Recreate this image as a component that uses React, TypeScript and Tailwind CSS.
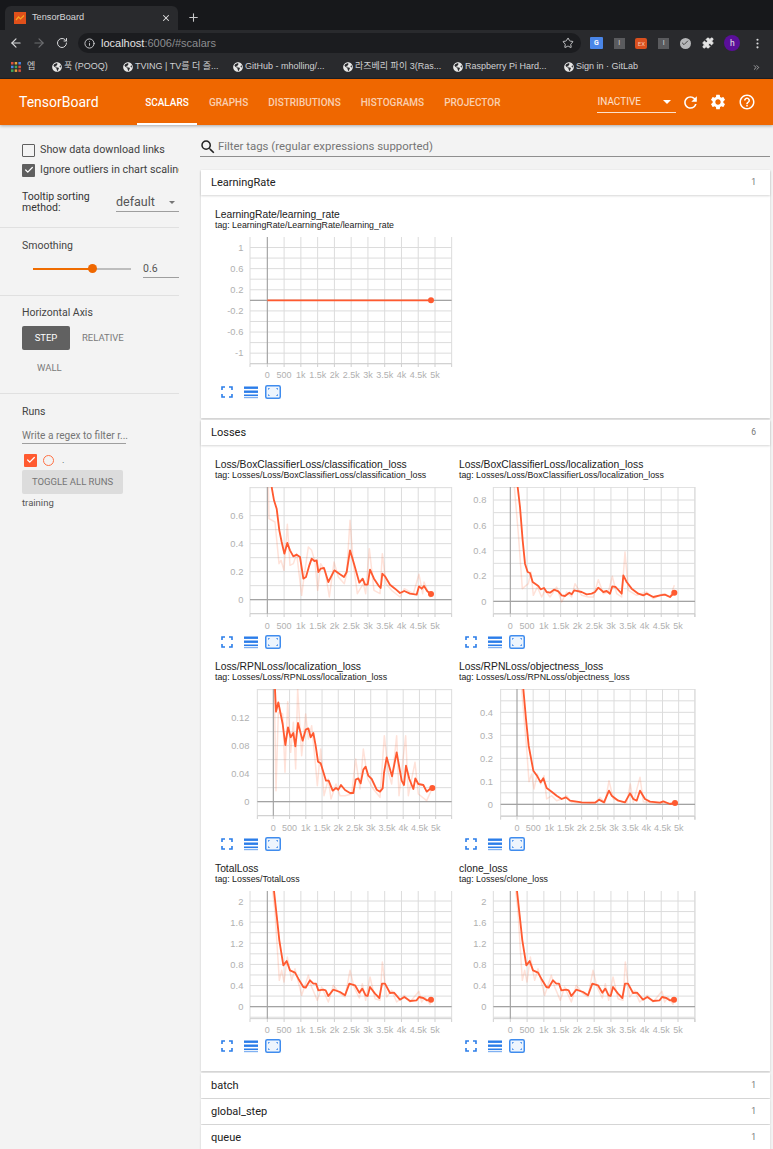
import React from 'react';
import { ArrowLeft, ArrowRight, RotateCw, Info, Star, X, Plus, Puzzle, EllipsisVertical, ChevronsRight, Check } from 'lucide-react';
import { MdRefresh, MdSettings, MdHelpOutline, MdSearch } from 'react-icons/md';
import { FaGlobeAmericas } from 'react-icons/fa';

const BOOKMARKS = [
  { label: '푹 (POOQ)', width: 'w-[71px]' },
  { label: 'TVING | TV를 더 즐...', width: 'w-[110px]' },
  { label: 'GitHub - mholling/...', width: 'w-[110px]' },
  { label: '라즈베리 파이 3(Ras...', width: 'w-[110px]' },
  { label: 'Raspberry Pi Hard...', width: 'w-[111px]' },
  { label: 'Sign in · GitLab', width: 'w-[80px]' },
];

const X_LABELS = ['0', '500', '1k', '1.5k', '2k', '2.5k', '3k', '3.5k', '4k', '4.5k', '5k'];

type ChartProps = {
  title: string;
  tag: string;
  vx: number;
  left: number;
  right: number;
  top: number;
  bottom: number;
  x0: number;
  xStep: number;
  labelY: number;
  ticks: [string, number][];
  zeroY: number;
  minor: number;
  smooth: string;
  faint?: string;
  dot: [number, number];
};

function Chart({ title, tag, vx, left, right, top, bottom, x0, xStep, labelY, ticks, zeroY, minor, smooth, faint, dot }: ChartProps) {
  const clip = `clip-${title.replace(/[^a-zA-Z]/g, '')}`;
  const hLines: number[] = [];
  for (let y = zeroY; y >= top; y -= minor) hLines.push(y);
  for (let y = zeroY + minor; y <= bottom + 1; y += minor) hLines.push(y);
  const vLines: number[] = [];
  for (let x = x0 + xStep; x < right; x += xStep) vLines.push(x);

  return (
    <div className="w-[244px] h-[202px] shrink-0">
      <div className="h-[14px] text-[10.3px] leading-[16px] text-[#212121] whitespace-nowrap font-['Liberation_Sans',sans-serif]">{title}</div>
      <div className="h-[11px] text-[8.8px] leading-[9px] text-[#212121] whitespace-nowrap font-['Liberation_Sans',sans-serif]">{tag}</div>
      <svg width="240" height="145" viewBox={`${vx} ${top} 720 435`} className="mt-[5px] block">
        <defs>
          <clipPath id={clip}>
            <rect x={left} y={top} width={right - left} height={bottom - top} />
          </clipPath>
        </defs>
        {hLines.map((y) => (
          <line key={y} x1={left} x2={right} y1={y} y2={y} stroke="#dcdcdc" strokeWidth="3" />
        ))}
        {[left, ...vLines, right].map((x) => (
          <line key={x} x1={x} x2={x} y1={top} y2={bottom} stroke="#dcdcdc" strokeWidth="3" />
        ))}
        <line x1={left} x2={right} y1={bottom} y2={bottom} stroke="#cfcfcf" strokeWidth="3" />
        {[left, x0, ...vLines, right].map((x) => (
          <line key={x} x1={x} x2={x} y1={bottom} y2={bottom + 10} stroke="#cfcfcf" strokeWidth="3" />
        ))}
        <line x1={left} x2={right} y1={zeroY} y2={zeroY} stroke="#a3a3a3" strokeWidth="3.5" />
        <line x1={x0} x2={x0} y1={top} y2={bottom} stroke="#a3a3a3" strokeWidth="3.5" />
        {ticks.map(([label, y]) => (
          <text key={label} x={x0 - 72} y={y + 10} textAnchor="end" fontSize="28" fill="#b0b0b0" fontFamily="'Liberation Sans', sans-serif">
            {label}
          </text>
        ))}
        {X_LABELS.map((label, i) => (
          <text key={label} x={x0 + i * xStep} y={labelY + 10} textAnchor="middle" fontSize="27" fill="#b0b0b0" fontFamily="'Liberation Sans', sans-serif">
            {label}
          </text>
        ))}
        <g clipPath={`url(#${clip})`}>
          {faint && <polyline points={faint} fill="none" stroke="#ff7043" strokeOpacity="0.2" strokeWidth="4.500" strokeLinejoin="round" />}
          <polyline points={smooth} fill="none" stroke="#ff5a30" strokeWidth="5.500" strokeLinejoin="round" />
          <circle cx={dot[0]} cy={dot[1]} r="9" fill="#ff5a30" />
        </g>
      </svg>
      <div className="h-[14px] mt-[3px] ml-[6px] flex items-center gap-[11px]">
        <svg width="12" height="12" viewBox="0 0 12 12" fill="none" stroke="#2b7de9" strokeWidth="1.6">
          <path d="M1 4V1h3M8 1h3v3M11 8v3H8M4 11H1V8" />
        </svg>
        <svg width="14" height="13" viewBox="0 0 14 13" fill="#2b7de9">
          <rect y="0.5" width="14" height="2.4" />
          <rect y="4.5" width="14" height="2.4" />
          <rect y="8.5" width="14" height="1.6" />
          <rect y="11" width="14" height="1.2" opacity="0.6" />
        </svg>
        <svg width="16" height="14" viewBox="0 0 16 14" fill="none" className="-ml-[4px]">
          <rect x="0.75" y="0.75" width="14.5" height="12.5" rx="1.5" fill="#eef5fd" stroke="#3f8cee" strokeWidth="1.5" />
          <path d="M3.5 4.500V3.500H4.500M11.500 3.500h1v1M12.500 9.500v1h-1M4.500 10.500H3.500V9.500" stroke="#2b7de9" strokeWidth="1" />
        </svg>
      </div>
    </div>
  );
}

function SectionHeader({ name, count }: { name: string; count: number }) {
  return (
    <div className="h-[25px] bg-white flex items-center justify-between pl-[10px] pr-[14px] shadow-[0_1px_2px_rgba(0,0,0,0.16)] relative">
      <span className="pt-[1px] text-[11px] font-['Roboto',sans-serif] text-[#212121]">{name}</span>
      <span className="text-[8.5px] font-['Roboto',sans-serif] text-[#757575]">{count}</span>
    </div>
  );
}

const box = { vx: 45, left: 150, right: 755, x0: 202, xStep: 50.3 };
const rightBox = { vx: 27, left: 130, right: 735, x0: 181, xStep: 50.3 };

const totalSmooth = '222,107 230,180 238,255 250,330 260,317 270,345 285,352 295,370 310,395 317,397 330,375 340,385 348,385 355,405 370,403 377,405 385,422 400,403 420,410 435,420 448,385 465,390 478,412 487,400 497,420 503,422 510,395 525,415 538,428 546,385 555,385 570,413 582,412 600,433 613,425 630,437 650,435 657,425 670,428 680,435 693,433';
const totalFaint = '218,107 225,170 238,375 245,345 252,380 262,305 275,375 285,340 305,420 325,360 335,395 352,435 365,395 385,440 400,390 420,415 435,425 450,345 462,395 478,428 487,385 497,435 510,365 525,430 540,435 547,320 560,425 575,405 590,440 613,420 630,440 657,408 665,440 675,425 690,447 693,433';
const shiftPoints = (pts: string, dx: number) =>
  pts.split(' ').map((p) => {
    const [x, y] = p.split(',').map(Number);
    return `${x + dx},${y}`;
  }).join(' ');

const totalTicks: [string, number][] = [['2', 138], ['1.6', 201], ['1.2', 265], ['0.8', 328], ['0.4', 391], ['0', 454]];

export default function App() {
  return (
    <div className="h-[1149px] w-[773px] overflow-hidden bg-[#f3f3f3] font-['Roboto',sans-serif]">
      {/* browser chrome */}
      <div className="h-[30px] bg-[#17181b] flex items-end pl-[5px]">
        <div className="w-[173px] h-[24px] bg-[#292a2d] rounded-t-[6px] flex items-center pl-[9px] pr-[7px]">
          <svg width="12" height="12" viewBox="0 0 12 12" className="shrink-0">
            <rect width="12" height="12" fill="#e0501a" />
            <path d="M2 8l2.500-3 2 2L10 3.500" fill="none" stroke="#f5a623" strokeWidth="1.200" />
          </svg>
          <span className="ml-[6px] text-[9.200px] text-[#d5d6d8] font-['Liberation_Sans',sans-serif] flex-1">TensorBoard</span>
          <X size={10} color="#e3e3e3" strokeWidth={2.5} />
        </div>
        <div className="ml-[9px] mb-[6px]"><Plus size={13} color="#c8c9cb" strokeWidth={2} /></div>
      </div>
      <div className="h-[26px] bg-[#292a2d] flex items-center pl-[9px] pr-[9px]">
        <ArrowLeft size={14} color="#d8d9db" />
        <ArrowRight size={14} color="#6d6e71" className="ml-[9px]" />
        <RotateCw size={12} color="#d8d9db" className="ml-[10px]" />
        <div className="ml-[10px] w-[503px] h-[20px] rounded-full bg-[#1b1c1f] flex items-center pl-[6px] pr-[7px]">
          <Info size={11} color="#d0d1d3" />
          <span className="ml-[6px] text-[11px] text-[#e3e3e3] font-['Liberation_Sans',sans-serif] flex-1">
            localhost<span className="text-[#8c8d90]">:6006/#scalars</span>
          </span>
          <Star size={12} color="#c5c6c8" />
        </div>
        <div className="ml-[9px] flex items-center flex-1 justify-between">
          <div className="w-[13px] h-[12px] bg-[#4a86e8] rounded-[1px] flex items-center justify-center text-[7px] text-white font-bold">G</div>
          <div className="w-[11px] h-[11px] bg-[#5a5b5e] flex items-center justify-center text-[7px] text-[#d5d5d5]">I</div>
          <div className="w-[12px] h-[11px] bg-[#d9501e] rounded-[2px] flex items-center justify-center text-[6px] text-[#f3c5b2]">EX</div>
          <div className="w-[11px] h-[11px] bg-[#5a5b5e] flex items-center justify-center text-[7px] text-[#d5d5d5]">I</div>
          <div className="w-[11px] h-[11px] bg-[#b5b6b8] rounded-full flex items-center justify-center"><Check size={8} color="#444" strokeWidth={3} /></div>
          <Puzzle size={12} color="#e5e5e5" fill="#e5e5e5" />
          <div className="w-[16px] h-[16px] rounded-full bg-[#5a0f99] flex items-center justify-center text-[8.5px] text-[#e5e5e5]">h</div>
          <EllipsisVertical size={13} color="#d8d9db" />
        </div>
      </div>
      <div className="h-[23px] bg-[#292a2d] flex items-center pl-[11px] pr-[12px] text-[9px] text-[#d0d1d3] font-['Liberation_Sans','Noto_Sans_CJK_KR',sans-serif] whitespace-nowrap border-b border-[#1f2023]">
        <svg width="10" height="10" viewBox="0 0 10 10" className="shrink-0">
          <rect width="2.500" height="2.500" fill="#d9503f" />
          <rect x="3.700" width="2.500" height="2.500" fill="#e8a33d" />
          <rect x="7.400" width="2.500" height="2.500" fill="#4a86e8" />
          <rect y="3.700" width="2.500" height="2.500" fill="#4a86e8" />
          <rect x="3.700" y="3.700" width="2.500" height="2.500" fill="#3fa85b" />
          <rect x="7.400" y="3.700" width="2.500" height="2.500" fill="#d9503f" />
          <rect y="7.400" width="2.500" height="2.500" fill="#3fa85b" />
          <rect x="3.700" y="7.400" width="2.500" height="2.500" fill="#e8a33d" />
          <rect x="7.400" y="7.400" width="2.500" height="2.500" fill="#d9503f" />
        </svg>
        <span className="ml-[6px] w-[25px]">엡</span>
        <div className="flex items-center">
          {BOOKMARKS.map((b) => (
            <div key={b.label} className={`flex items-center shrink-0 ${b.width}`}>
              <FaGlobeAmericas size={10} color="#e5e5e5" className="shrink-0" />
              <span className="ml-[2px]">{b.label}</span>
            </div>
          ))}
        </div>
        <ChevronsRight size={9} color="#c5c6c8" className="ml-auto" />
      </div>

      {/* tensorboard toolbar */}
      <header className="h-[46px] bg-[#ef6700] text-white flex items-center pl-[19px] pr-[17px] shadow-[0_1px_3px_rgba(0,0,0,0.3)] relative">
        <span className="w-[118px] shrink-0 text-[14px]">TensorBoard</span>
        <nav className="flex items-center gap-[4px] text-[10px] font-medium h-full shrink-0">
          <span className="h-full w-[60px] flex items-center justify-center border-b-2 border-white pt-[2px]">SCALARS</span>
          <span className="h-full px-[8px] flex items-center text-white/70">GRAPHS</span>
          <span className="h-full px-[8px] flex items-center text-white/70">DISTRIBUTIONS</span>
          <span className="h-full px-[8px] flex items-center text-white/70">HISTOGRAMS</span>
          <span className="h-full px-[8px] flex items-center text-white/70">PROJECTOR</span>
        </nav>
        <div className="ml-[89px] w-[79px] h-[21px] shrink-0 border-b border-white/80 flex items-center justify-between pr-[5px] text-[10px] text-white/80">
          INACTIVE
          <span className="w-0 h-0 border-x-[4px] border-x-transparent border-t-[4px] border-t-white" />
        </div>
        <MdRefresh size={19} className="ml-[5px] shrink-0" />
        <MdSettings size={18} className="ml-[9px] shrink-0" />
        <MdHelpOutline size={18} className="ml-[11px] shrink-0" />
      </header>

      <div className="flex">
        {/* sidebar */}
        <aside className="w-[200px] shrink-0 text-[10.750px] text-[#424242]">
          <div className="w-[179px] pl-[22px] pt-[18px] h-[103px] border-b border-[#e0e0e0]">
            <div className="flex items-center h-[14px]">
              <span className="w-[13px] h-[13px] border-[1.5px] border-[#5f5f5f] rounded-[1px] shrink-0" />
              <span className="ml-[5px] whitespace-nowrap">Show data download links</span>
            </div>
            <div className="flex items-center h-[14px] mt-[6px] overflow-hidden">
              <span className="w-[13px] h-[13px] bg-[#5f5f5f] rounded-[1px] shrink-0 flex items-center justify-center"><Check size={10} color="#fff" strokeWidth={3} /></span>
              <span className="ml-[5px] whitespace-nowrap">Ignore outliers in chart scaling</span>
            </div>
            <div className="flex mt-[13px]">
              <div className="w-[94px] text-[10.500px] leading-[11px] text-[#333] pt-[1px]">Tooltip sorting<br />method:</div>
              <div className="w-[63px] h-[19px] mt-[3px] border-b border-[#9e9e9e] flex items-center justify-between pr-[4px] text-[12.500px] text-[#555]">
                default
                <span className="w-0 h-0 border-x-[3.500px] border-x-transparent border-t-[3.500px] border-t-[#757575]" />
              </div>
            </div>
          </div>
          <div className="w-[179px] h-[68px] pl-[22px] pt-[12px] border-b border-[#e0e0e0]">
            <div className="text-[10.500px] leading-[12px] text-[#444]">Smoothing</div>
            <div className="flex items-center mt-[7px]">
              <div className="ml-[11px] w-[98px] h-[2px] bg-[#bdbdbd] flex items-center">
                <div className="w-[59px] h-[2px] bg-[#ef6c00]" />
                <div className="w-[9px] h-[9px] rounded-full bg-[#ef6700] -ml-[4px] shrink-0" />
              </div>
              <div className="ml-[12px] w-[36px] h-[19px] pt-[3px] border-b border-[#9e9e9e] text-[10.500px] leading-[13px] text-[#555]">0.6</div>
            </div>
          </div>
          <div className="w-[179px] h-[98px] pl-[22px] pt-[11px] border-b border-[#e0e0e0]">
            <div className="text-[10.500px] leading-[12px] text-[#444]">Horizontal Axis</div>
            <div className="flex items-center mt-[7px] text-[9.500px]">
              <div className="w-[48px] h-[24px] bg-[#616161] rounded-[2px] text-white flex items-center justify-center">STEP</div>
              <div className="ml-[12px] text-[#7a7a7a]">RELATIVE</div>
            </div>
            <div className="ml-[15px] mt-[13px] text-[9.500px] leading-[10px] text-[#7a7a7a]">WALL</div>
          </div>
          <div className="pl-[22px] pt-[12px]">
            <div className="text-[10.500px] leading-[12px] text-[#444]">Runs</div>
            <div className="w-[104px] h-[19px] mt-[7px] border-b border-[#9e9e9e] text-[10.100px] leading-[21px] text-[#757575] whitespace-nowrap">Write a regex to filter r...</div>
            <div className="flex items-center h-[14px] mt-[9px] ml-[2px]">
              <span className="w-[13px] h-[13px] bg-[#ff5a30] rounded-[1px] flex items-center justify-center"><Check size={10} color="#fff" strokeWidth={3} /></span>
              <span className="ml-[6px] w-[11px] h-[11px] rounded-full border-[1.5px] border-[#ff7043]" />
              <span className="ml-[8px] text-[9px] leading-[10px]">.</span>
            </div>
            <div className="w-[101px] h-[24px] mt-[3px] bg-[#dcdcdc] rounded-[2px] flex items-center justify-center text-[9.500px] text-[#757575]">TOGGLE ALL RUNS</div>
            <div className="mt-[2px] text-[9.500px] leading-[13px] text-[#555]">training</div>
          </div>
        </aside>

        {/* main column */}
        <main className="w-[570px]">
          <div className="h-[32px] flex items-end border-b border-[#8f8f8f]">
            <MdSearch size={18} color="#212121" className="ml-[-1px]" />
            <span className="ml-[1px] mb-[1px] text-[11.400px] leading-[18px] text-[#757575]">Filter tags (regular expressions supported)</span>
          </div>
          <div className="mt-[13px] ml-[1px] flex flex-col gap-[2px]">
            <section className="shadow-[0_1px_2px_rgba(0,0,0,0.18)]">
              <SectionHeader name="LearningRate" count={1} />
              <div className="bg-white pt-[12px] pb-[9px] pl-[14px]">
                <Chart
                  {...box}
                  title="LearningRate/learning_rate"
                  tag="tag: LearningRate/LearningRate/learning_rate"
                  top={322}
                  bottom={702}
                  labelY={735}
                  zeroY={512}
                  minor={31.700}
                  ticks={[['1', 353], ['0.6', 417], ['0.2', 480], ['-0.2', 543], ['-0.6', 607], ['-1', 670]]}
                  smooth="202,512 693,512"
                  dot={[693, 512]}
                />
              </div>
            </section>
            <section className="shadow-[0_1px_2px_rgba(0,0,0,0.18)]">
              <SectionHeader name="Losses" count={6} />
              <div className="bg-white pt-[12px] pb-[8px] pl-[14px] flex flex-wrap">
                <Chart
                  {...box}
                  title="Loss/BoxClassifierLoss/classification_loss"
                  tag="tag: Losses/Loss/BoxClassifierLoss/classification_loss"
                  top={110}
                  bottom={490}
                  labelY={525}
                  zeroY={448}
                  minor={42}
                  ticks={[['0.6', 195], ['0.4', 280], ['0.2', 364], ['0', 448]]}
                  smooth="215,110 222,150 230,175 238,240 245,275 253,310 262,278 270,300 280,318 290,313 300,320 310,385 318,380 328,345 335,325 343,332 350,330 355,365 362,355 372,353 385,395 403,360 420,372 432,380 440,365 450,300 462,340 478,397 488,385 495,403 503,403 510,358 522,385 535,405 542,413 547,370 555,378 570,403 585,415 600,428 613,422 630,430 650,433 657,408 665,415 672,407 682,423 693,431"
                  faint="205,110 207,205 225,215 237,340 243,330 252,360 262,222 270,345 280,340 290,310 305,435 312,380 325,290 335,300 345,335 353,420 362,340 375,360 388,440 402,335 415,380 433,400 440,370 450,210 460,340 472,430 490,400 497,430 508,295 522,420 540,430 547,310 558,400 575,420 600,440 613,415 640,430 657,372 668,430 672,395 690,440 693,431"
                  dot={[693, 431]}
                />
                <Chart
                  {...rightBox}
                  title="Loss/BoxClassifierLoss/localization_loss"
                  tag="tag: Losses/Loss/BoxClassifierLoss/localization_loss"
                  top={110}
                  bottom={490}
                  labelY={525}
                  zeroY={453}
                  minor={38}
                  ticks={[['0.8', 148], ['0.6', 225], ['0.4', 301], ['0.2', 377], ['0', 453]]}
                  smooth="203,110 210,170 218,270 225,340 233,365 240,368 248,395 265,407 272,417 282,413 290,425 300,427 312,418 325,423 335,435 345,437 358,427 365,432 373,420 395,425 410,432 425,430 435,425 445,412 460,425 470,422 480,430 487,408 497,410 515,430 520,375 530,395 545,415 565,430 580,435 590,430 610,440 630,435 645,433 660,440 673,427"
                  faint="193,110 205,250 217,415 235,400 243,365 250,435 262,410 275,440 285,420 300,440 320,410 335,455 350,425 365,440 375,400 395,435 415,440 430,440 445,388 460,430 475,425 487,378 500,430 515,440 525,305 535,420 560,435 590,425 610,445 640,430 660,440 673,405"
                  dot={[673, 427]}
                />
                <Chart
                  vx={45}
                  left={172}
                  right={755}
                  x0={220}
                  xStep={48.700}
                  title="Loss/RPNLoss/localization_loss"
                  tag="tag: Losses/Loss/RPNLoss/localization_loss"
                  top={100}
                  bottom={480}
                  labelY={515}
                  zeroY={438}
                  minor={42}
                  ticks={[['0.12', 186], ['0.08', 270], ['0.04', 354], ['0', 438]]}
                  smooth="225,100 228,168 235,140 248,205 256,268 264,215 272,245 280,232 286,272 294,202 308,255 317,222 325,218 332,245 340,232 347,270 354,318 362,323 378,375 386,375 398,405 408,397 415,402 423,388 435,403 450,412 460,412 467,372 475,368 482,383 490,342 497,333 505,360 515,370 530,402 540,408 548,398 552,352 560,305 576,362 590,290 605,375 612,388 618,330 628,370 640,400 646,368 655,385 670,388 680,408 690,400 697,397"
                  faint="223,100 228,405 235,170 248,175 255,350 263,138 272,290 280,200 287,340 293,100 305,300 317,175 325,250 335,210 345,310 352,390 362,280 372,420 385,370 393,430 408,385 420,420 435,420 455,415 467,310 480,400 490,280 503,370 520,400 540,425 553,240 565,350 575,385 590,240 597,420 617,240 625,420 645,320 655,415 680,435 697,397"
                  dot={[697, 397]}
                />
                <Chart
                  vx={27}
                  left={152}
                  right={735}
                  x0={201}
                  xStep={48.500}
                  title="Loss/RPNLoss/objectness_loss"
                  tag="tag: Losses/Loss/RPNLoss/objectness_loss"
                  top={100}
                  bottom={482}
                  labelY={515}
                  zeroY={446}
                  minor={34.500}
                  ticks={[['0.4', 170], ['0.3', 239], ['0.2', 308], ['0.1', 377], ['0', 446]]}
                  smooth="220,100 228,190 236,270 250,345 262,362 272,380 280,368 290,397 305,408 320,420 335,430 348,425 360,435 380,438 395,440 420,441 435,441 447,432 462,440 477,405 485,420 505,435 525,440 540,413 550,430 560,435 570,405 585,430 600,438 630,441 640,437 660,445 675,442"
                  faint="215,100 230,280 237,378 245,355 252,400 262,355 272,385 282,360 290,430 305,420 320,435 335,430 350,420 365,440 400,442 440,440 450,425 465,442 477,375 490,430 530,442 541,385 550,440 570,365 580,438 620,443 675,442"
                  dot={[675, 442]}
                />
                <Chart
                  {...box}
                  title="TotalLoss"
                  tag="tag: Losses/TotalLoss"
                  top={107}
                  bottom={490}
                  labelY={522}
                  zeroY={454}
                  minor={31.700}
                  ticks={totalTicks}
                  smooth={totalSmooth}
                  faint={totalFaint}
                  dot={[693, 433]}
                />
                <Chart
                  {...rightBox}
                  title="clone_loss"
                  tag="tag: Losses/clone_loss"
                  top={107}
                  bottom={490}
                  labelY={522}
                  zeroY={454}
                  minor={31.700}
                  ticks={totalTicks}
                  smooth={shiftPoints(totalSmooth, -21)}
                  faint={shiftPoints(totalFaint, -21)}
                  dot={[672, 433]}
                />
              </div>
            </section>
            <div className="flex flex-col gap-[1px]">
              <SectionHeader name="batch" count={1} />
              <SectionHeader name="global_step" count={1} />
              <SectionHeader name="queue" count={1} />
            </div>
          </div>
        </main>
      </div>
    </div>
  );
}
